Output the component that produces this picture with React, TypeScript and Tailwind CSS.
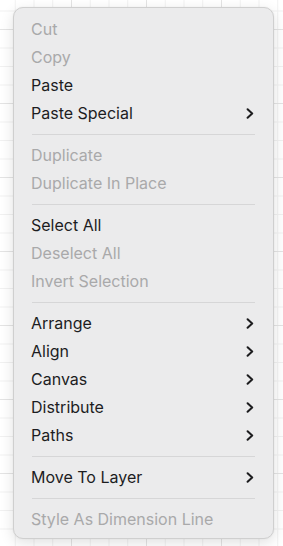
import React from "react";

type Item =
  | { kind: "item"; label: string; disabled?: boolean; sub?: boolean }
  | { kind: "sep" };

const items: Item[] = [
  { kind: "item", label: "Cut", disabled: true },
  { kind: "item", label: "Copy", disabled: true },
  { kind: "item", label: "Paste" },
  { kind: "item", label: "Paste Special", sub: true },
  { kind: "sep" },
  { kind: "item", label: "Duplicate", disabled: true },
  { kind: "item", label: "Duplicate In Place", disabled: true },
  { kind: "sep" },
  { kind: "item", label: "Select All" },
  { kind: "item", label: "Deselect All", disabled: true },
  { kind: "item", label: "Invert Selection", disabled: true },
  { kind: "sep" },
  { kind: "item", label: "Arrange", sub: true },
  { kind: "item", label: "Align", sub: true },
  { kind: "item", label: "Canvas", sub: true },
  { kind: "item", label: "Distribute", sub: true },
  { kind: "item", label: "Paths", sub: true },
  { kind: "sep" },
  { kind: "item", label: "Move To Layer", sub: true },
  { kind: "sep" },
  { kind: "item", label: "Style As Dimension Line", disabled: true },
];

function Chevron() {
  return (
    <svg width="8" height="11" viewBox="0 0 8 11" fill="none">
      <path
        d="M1.6 1.2 L6.2 5.5 L1.6 9.8"
        stroke="#1d1d1f"
        strokeWidth="2"
        strokeLinecap="round"
        strokeLinejoin="round"
      />
    </svg>
  );
}

export default function App() {
  return (
    <div className="w-[283px] h-[546px] overflow-hidden bg-white bg-[linear-gradient(to_right,#e4e4e4_1px,transparent_1px),linear-gradient(to_bottom,#e4e4e4_1px,transparent_1px),linear-gradient(to_right,#f1f1f1_1px,transparent_1px),linear-gradient(to_bottom,#f1f1f1_1px,transparent_1px)] bg-[size:75px_75px,75px_74px,18.75px_18.75px,18.5px_18.5px] bg-[position:71px_0,0_29px,14.75px_0,0_10.5px] pt-[7px] pl-[13px] font-['Inter','Liberation_Sans',sans-serif]">
      <div className="w-[261px] rounded-[10px] border border-[#cfcfcf] bg-[#ebebec] pt-[7px] pb-[5px] shadow-[0_4px_14px_rgba(0,0,0,0.12),0_0_2px_rgba(0,0,0,0.06)]">
        {items.map((it, i) =>
          it.kind === "sep" ? (
            <div key={i} className="flex h-[14px] items-center px-[18px]">
              <div className="h-px w-full bg-[#d6d6d7]" />
            </div>
          ) : (
            <div
              key={i}
              className={`flex h-[28px] items-center justify-between pl-[17px] pr-[19px] text-[16px] ${
                it.disabled ? "text-[#a9a9aa]" : "text-[#1d1d1f]"
              }`}
            >
              <span>{it.label}</span>
              {it.sub && <Chevron />}
            </div>
          )
        )}
      </div>
    </div>
  );
}
